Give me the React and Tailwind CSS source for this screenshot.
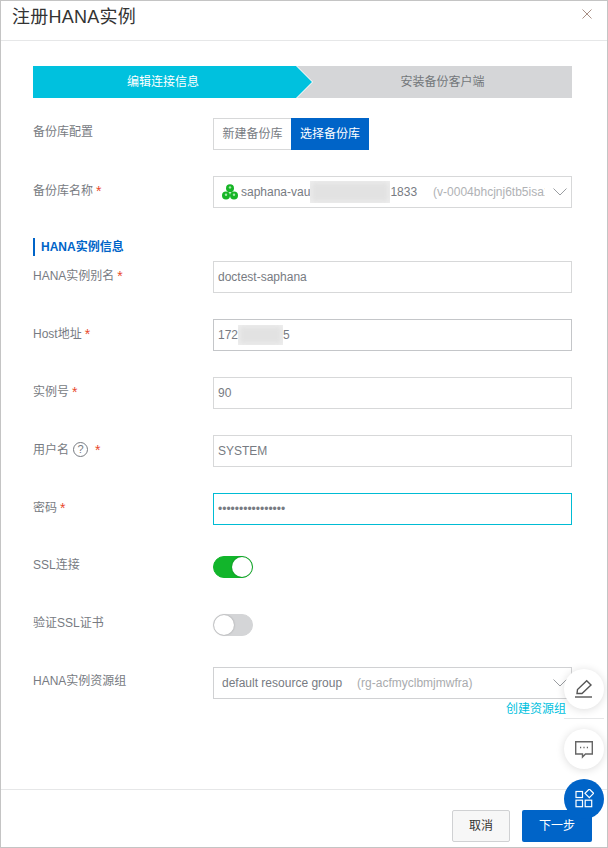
const font = { fontFamily: '"Liberation Sans", "Noto Sans CJK SC", sans-serif' }

function Star() {
  return <span className="ml-[3px] text-[#e8492c] text-[14px] leading-[14px]">*</span>
}

function Row({ label, required, help, first, children }) {
  return (
    <div className="flex h-8">
      <div className={`w-[180px] shrink-0 flex items-start text-xs leading-[14px] text-[#777b82] ${first ? 'pt-[7px]' : 'pt-2'}`}>
        <span>{label}</span>
        {help && (
          <span className="ml-1 w-[15px] h-[15px] -mt-px mr-1 rounded-full border border-[#777b82] flex items-center justify-center text-[11px] leading-none">?</span>
        )}
        {required && <Star />}
      </div>
      <div className="flex-1 min-w-0 relative">{children}</div>
    </div>
  )
}

function TextInput({ value, type = 'text', focused }) {
  return (
    <input
      readOnly
      type={type}
      value={value}
      className={`w-full h-8 px-1 text-xs text-[#777b82] outline-none border bg-white ${
        focused ? 'border-[#00bcd4]' : 'border-[#d7d8d9]'
      }`}
      style={font}
    />
  )
}

function Chevron() {
  return (
    <svg width="16" height="10" viewBox="0 0 16 10" fill="none" stroke="#9a9da1" strokeWidth="1" className="absolute right-[4px] top-[11px]">
      <path d="M1.5 1.5 L8 8 L14.5 1.5" />
    </svg>
  )
}

function Cluster() {
  return (
    <svg width="16" height="16" viewBox="0 0 16 16" className="shrink-0">
      <circle cx="8" cy="4.2" r="4" fill="#17b526" />
      <circle cx="4" cy="11.6" r="4" fill="#17b526" />
      <circle cx="12" cy="11.6" r="4" fill="#17b526" />
      <circle cx="8" cy="3.4" r="1.2" fill="#a5e8ad" />
      <circle cx="4" cy="10.8" r="1.2" fill="#a5e8ad" />
      <circle cx="12" cy="10.8" r="1.2" fill="#a5e8ad" />
    </svg>
  )
}

function Toggle({ on }) {
  return (
    <div className={`mt-[5px] w-10 h-[22px] rounded-full flex items-center border ${on ? 'bg-[#12b52b] border-[#12b52b] justify-end' : 'bg-[#d4d5d7] border-[#d4d5d7] justify-start'}`}>
      <div className="w-5 h-5 rounded-full bg-white shadow-[0_0_2px_rgba(0,0,0,0.3)]" />
    </div>
  )
}

function Smudge({ width, height }) {
  return (
    <span className={`inline-block shrink-0 overflow-hidden bg-[#f3f3f3] ${width} ${height}`}>
      <span className="block w-full h-full bg-[#e2e2e2] blur-[3px]" />
    </span>
  )
}

function FloatButton({ className, children }) {
  return (
    <div className={`absolute right-[3px] w-10 h-10 rounded-full flex items-center justify-center ${className}`}>
      {children}
    </div>
  )
}

export default function App() {
  return (
    <div className="relative w-[608px] h-[848px] bg-white flex flex-col border border-[#c4c4c4] overflow-hidden" style={font}>
      {/* header */}
      <div className="h-10 shrink-0 border-b border-[#e6e7e8] flex items-center justify-between pl-[11px] pr-[15px]">
        <h1 className="text-lg tracking-[0.25px] text-[#333] leading-none -mt-[8px]">注册HANA实例</h1>
        <svg width="10" height="10" viewBox="0 0 10 10" stroke="#a88f85" strokeWidth="1" className="-mt-[14px]">
          <path d="M0.5 0.5 L9.5 9.5 M9.5 0.5 L0.5 9.5" />
        </svg>
      </div>

      {/* body */}
      <div className="flex-1 pl-8 pr-[35px] pt-[25px]">
        <div className="flex h-8 text-xs leading-8 text-center">
          <div className="w-[279px] shrink-0 pr-[19px] bg-[#00c1de] text-white [clip-path:polygon(0_0,263px_0,279px_50%,263px_100%,0_100%)]">
            编辑连接信息
          </div>
          <div className="flex-1 -ml-[15px] pl-4 bg-[#d5d6d8] text-[#73777a] [clip-path:polygon(0_0,100%_0,100%_100%,0_100%,16px_50%)]">
            安装备份客户端
          </div>
        </div>

        <div className="mt-5 flex flex-col gap-[26px]">
          <Row label="备份库配置" first>
            <div className="flex h-8 text-xs">
              <div className="w-[78px] border border-[#d7d8d9] border-r-0 flex items-center justify-center text-[#777b82]">新建备份库</div>
              <div className="w-[78px] bg-[#0064c8] flex items-center justify-center text-white">选择备份库</div>
            </div>
          </Row>
          <Row label="备份库名称" required>
            <div className="h-8 border border-[#d7d8d9] pl-2 pr-[26px]">
              <div className="h-full flex items-center text-xs text-[#777b82] whitespace-nowrap overflow-hidden">
                <Cluster />
                <span className="ml-[3px]">saphana-vau</span>
                <Smudge width="w-[80px]" height="h-[22px]" />
                <span>1833</span>
                <span className="ml-[16px] text-[#b0b2b5]">(v-0004bhcjnj6tb5isa1</span>
              </div>
            </div>
            <Chevron />
          </Row>
        </div>

        <div className="mt-[30px] h-[18px] flex items-center border-l-2 border-[#0064c8] pl-[6px] text-xs font-bold text-[#0064c8]">
          HANA实例信息
        </div>

        <div className="mt-[5px] flex flex-col gap-[26px]">
          <Row label="HANA实例别名" required>
            <TextInput value="doctest-saphana" />
          </Row>
          <Row label="Host地址" required>
            <div className="h-8 border border-[#c4c6c9] flex items-center px-1 text-xs text-[#777b82] overflow-hidden">
              <span>172</span>
              <Smudge width="w-[45px]" height="h-5" />
              <span>5</span>
            </div>
          </Row>
          <Row label="实例号" required>
            <TextInput value="90" />
          </Row>
          <Row label="用户名" required help>
            <TextInput value="SYSTEM" />
          </Row>
          <Row label="密码" required>
            <TextInput value="1234567890123456" type="password" focused />
          </Row>
          <Row label="SSL连接" first>
            <Toggle on />
          </Row>
          <Row label="验证SSL证书" first>
            <Toggle />
          </Row>
          <Row label="HANA实例资源组" first>
            <div className="h-8 border border-[#d0d1d3] flex items-center pl-2 text-xs text-[#777b82] whitespace-nowrap">
              <span>default resource group</span>
              <span className="ml-[15px] text-[#a9abae]">(rg-acfmyclbmjmwfra)</span>
            </div>
            <Chevron />
            <div className="mt-[3px] pr-[6px] text-right text-xs leading-[14px] text-[#00c1de]">创建资源组</div>
          </Row>
        </div>
      </div>

      {/* footer */}
      <div className="h-[58px] shrink-0 border-t border-[#e6e7e8] flex justify-end gap-3 pt-5 pr-[15px]">
        <button className="w-[58px] h-8 rounded-[2px] border border-[#d0d1d3] bg-[#f7f7f7] text-xs text-[#333]">取消</button>
        <button className="w-[70px] h-8 rounded-[2px] bg-[#0064c8] text-xs text-white">下一步</button>
      </div>

      {/* floating tools */}
      <FloatButton className="top-[668px] bg-white shadow-[0_1px_8px_rgba(0,0,0,0.14)]">
        <svg width="20" height="20" viewBox="0 0 20 20" fill="none" stroke="#555" strokeWidth="1.4">
          <path d="M3 14.5 L3.5 10.5 L12.7 1.7 L17 6 L8 14.5 Z" />
          <path d="M1 18 H18" />
        </svg>
      </FloatButton>
      <div className="absolute right-[3px] top-[717px] w-10 h-px bg-[#e6e7e8]" />
      <FloatButton className="top-[728px] bg-white shadow-[0_1px_8px_rgba(0,0,0,0.14)]">
        <svg width="20" height="20" viewBox="0 0 20 20" fill="none" stroke="#666" strokeWidth="1.4">
          <path d="M1.7 2.7 H18.3 V15 H11.5 L8.5 18 V15 H1.7 Z" />
          <path d="M6 8.5 H7.2 M9.4 8.5 H10.6 M12.8 8.5 H14" strokeWidth="1.6" />
        </svg>
      </FloatButton>
      <FloatButton className="top-[778px] bg-[#0064c8]">
        <svg width="20" height="20" viewBox="0 0 20 20" fill="none" stroke="#fff" strokeWidth="1.2">
          <rect x="2" y="2.5" width="6.5" height="6" />
          <rect x="2" y="11.2" width="6.5" height="6.5" />
          <rect x="11.2" y="11.2" width="6.5" height="6.5" />
          <path d="M15.3 0 L19.6 4.3 L15.3 8.6 L11 4.3 Z" />
        </svg>
      </FloatButton>
    </div>
  )
}
